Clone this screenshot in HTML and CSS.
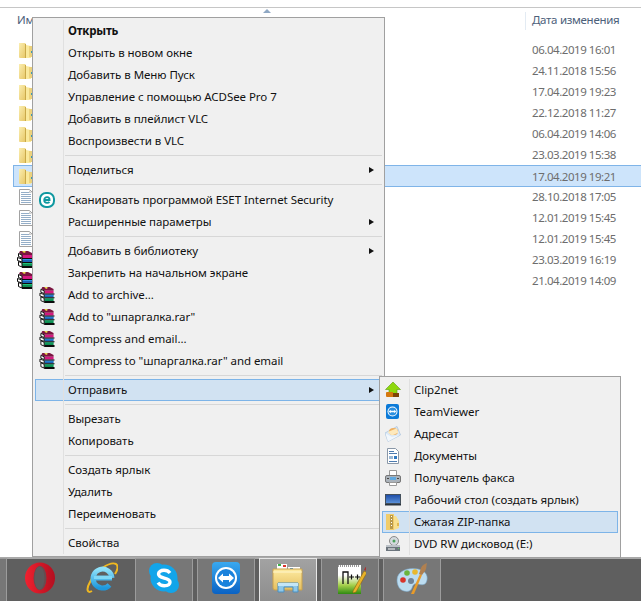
FILE: index.html
```html
<!DOCTYPE html>
<html lang="ru">
<head>
<meta charset="utf-8">
<title>Отправить — Сжатая ZIP-папка</title>
<link rel="stylesheet" href="styles.css">
</head>
<body>
<svg class="defs" width="0" height="0" aria-hidden="true">
  <defs>
    <linearGradient id="fold" x1="0" y1="0" x2="1" y2="1"><stop offset="0" stop-color="#fbeeb0"/><stop offset="1" stop-color="#e6c563"/></linearGradient>
    <symbol id="i-folder" viewBox="0 0 16 16">
      <path d="M1 1h6l1 1v14H2a1 1 0 0 1-1-1z" fill="url(#fold)"/>
      <path d="M7 2h1v14H7z" fill="#c9a94a"/>
      <path d="M8 3l5 1v12H8z" fill="#fae99c"/>
      <path d="M11 4h3v11h-3z" fill="#ecd27c"/>
      <path d="M13 9h1v2h-1z" fill="#3d9bb0"/>
    </symbol>
    <symbol id="i-file" viewBox="0 0 14 16">
      <path d="M.5.5h10l3 3v12H.5z" fill="#fff" stroke="#a2a2a2"/>
      <path d="M2 3.500h8M2 5.500h10M2 7.500h10M2 9.500h10M2 11.500h10M2 13.500h10" stroke="#94aec8"/>
      <path d="M10 1l3 3h-3z" fill="#ccc"/>
    </symbol>
    <symbol id="i-rar" viewBox="0 0 16 17">
      <path d="M3 0h8l4 2v2H5L2 2z" fill="#7a1440"/>
      <path d="M5 0h3l1 1-2 1z" fill="#e8d84a"/>
      <path d="M5 4h10v3H5z" fill="#d4187f"/>
      <path d="M5 8h10v3H5z" fill="#1b62b4"/>
      <path d="M5 8h10v1H5z" fill="#2f96e6"/>
      <path d="M5 12h10v3H5z" fill="#0e8c52"/>
      <path d="M5 12h10v1H5z" fill="#20c078"/>
      <path d="M5 7h11v1H5zM5 11h11v1H5zM5 15h11v2H5z" fill="#0c0c0c"/>
      <path d="M1.500 2.500l3.500 1.500v3L1.500 5.500zM.5 6.500l4.500 1.500v3L.5 9.500zM1.500 10.500l3.500 1.500v4L1.500 14.500z" fill="#fff" stroke="#0c0c0c" stroke-width="1"/>
    </symbol>
    <symbol id="i-eset" viewBox="0 0 16 16">
      <rect x="1" y="1" width="14" height="14" rx="6" fill="#fff" stroke="#0f98a0" stroke-width="2"/>
      <path d="M5.200 8h5.400c0-1.800-1-2.800-2.500-2.800S5.200 6.400 5.200 8s1 2.900 2.900 2.900c1 0 1.800-.3 2.400-.9" fill="none" stroke="#0f98a0" stroke-width="1.800"/>
    </symbol>
    <symbol id="i-clip" viewBox="0 0 16 16">
      <path d="M8 0l7.500 7.500H12V12H4V7.500H.5z" fill="#8ed80e" stroke="#5c9a0a" stroke-width=".6"/>
      <path d="M2 10h6v5H2a1 1 0 0 1-1-1v-3a1 1 0 0 1 1-1z" fill="#d5780f"/>
      <path d="M8 11h6v4H8z" fill="#7e4508"/>
    </symbol>
    <symbol id="i-tv" viewBox="0 0 16 16">
      <rect x="1" y="0" width="13" height="15" rx="2" fill="#0b7ad8"/>
      <circle cx="7.500" cy="7.500" r="5" fill="#fff"/>
      <circle cx="7.500" cy="7.500" r="4" fill="#2a8fe0"/>
      <path d="M3.800 7.500l2-1.800v1.100h3.400V5.700l2 1.800-2 1.800V8.200H5.800v1.100z" fill="#fff"/>
    </symbol>
    <symbol id="i-mail" viewBox="0 0 16 16">
      <path d="M0 7l12-6.500L15.500 9 3 15.500z" fill="#dbe9f7" stroke="#9ab8d6" stroke-width=".6"/>
      <ellipse cx="8.500" cy="5.500" rx="4.500" ry="3.500" fill="#f0b060"/>
      <path d="M2.500 6l9-3.500 2 4-6.500 3z" fill="#fde9bd"/>
      <path d="M.5 7.500L7 11l8-2L3 15.500z" fill="#f2f7fc"/>
    </symbol>
    <symbol id="i-doc" viewBox="0 0 16 16">
      <path d="M2.500.5h8l3 3v12h-11z" fill="#fff" stroke="#8a98a8"/>
      <path d="M4 3.500h5M4 5.500h8M4 13.500h8" stroke="#4c7bb0"/>
      <path d="M4 8h4v3H4z" fill="#9cb8d4"/>
      <path d="M9 8h3v3H9z" fill="#2e78c0"/>
    </symbol>
    <symbol id="i-fax" viewBox="0 0 16 16">
      <path d="M4.500.5h7v5h-7z" fill="#fff" stroke="#9a9a9a"/>
      <rect x="0.500" y="5.500" width="15" height="7" rx="1.500" fill="#aab2ba" stroke="#777"/>
      <path d="M5 7h6v3H5z" fill="#5fa8e0"/>
      <path d="M2 8h2v1H2zM12 8h2v1h-2z" fill="#444"/>
      <path d="M4.500 12.500h7v3h-7z" fill="#fff" stroke="#9a9a9a"/>
    </symbol>
    <linearGradient id="desk" x1="0" y1="0" x2="0" y2="1"><stop offset="0" stop-color="#1f4ea8"/><stop offset="1" stop-color="#5a90d8"/></linearGradient>
    <symbol id="i-desk" viewBox="0 0 16 16">
      <path d="M0 2h16v10H0z" fill="#44505c"/>
      <path d="M1 3h14v8H1z" fill="url(#desk)"/>
      <path d="M0 12h16v1.500H0z" fill="#2a333c"/>
    </symbol>
    <symbol id="i-zip" viewBox="0 0 16 16">
      <path d="M1 0h8v16H1z" fill="#f0cc6a"/>
      <path d="M9 2h2l3 5v7l-5 2z" fill="#f8e08e"/>
      <path d="M5 1h3v14H5z" fill="#b99a4a"/>
      <path d="M6 2h1v1H6zM6 5h1v1H6zM6 8h1v1H6zM6 11h1v1H6z" fill="#fff"/>
      <path d="M12 9h2v3h-2z" fill="#e2b84e"/>
    </symbol>
    <symbol id="i-dvd" viewBox="0 0 16 16">
      <circle cx="9" cy="5" r="4.500" fill="#d4d9de" stroke="#8a8a8a"/>
      <circle cx="9" cy="5" r="1.500" fill="#4aa05a"/>
      <path d="M1 9h14v6H1z" fill="#6c757d"/>
      <path d="M1 9h14v2H1z" fill="#bcc2c8"/>
      <path d="M3 12.500h7v1H3z" fill="#fff"/>
      <path d="M13 12h1v1h-1z" fill="#5ad05a"/>
    </symbol>
    <linearGradient id="operaG" x1="0" y1="0" x2="1" y2="0"><stop offset="0" stop-color="#f0212f"/><stop offset="1" stop-color="#b30f20"/></linearGradient>
    <linearGradient id="ieG" x1="0" y1="0" x2="0" y2="1"><stop offset="0" stop-color="#8fe2fa"/><stop offset="1" stop-color="#1e98dc"/></linearGradient>
    <linearGradient id="tvG" x1="0" y1="0" x2="0" y2="1"><stop offset="0" stop-color="#39a9f0"/><stop offset="1" stop-color="#0a62c4"/></linearGradient>
    <linearGradient id="nppG" x1="0" y1="0" x2="0" y2="1"><stop offset=".35" stop-color="#fff"/><stop offset=".7" stop-color="#a4cf4a"/><stop offset="1" stop-color="#2e8a12"/></linearGradient>
    <linearGradient id="expG" x1="0" y1="0" x2="0" y2="1"><stop offset="0" stop-color="#fdeaa0"/><stop offset="1" stop-color="#e5bf60"/></linearGradient>
  </defs>
</svg>

<div class="screen">
  <main class="explorer">
    <div class="top-line"></div>
    <header class="col-head">
      <span class="col-name">Имя</span>
      <span class="col-date">Дата изменения</span>
    </header>
    <span class="sort-arrow"></span>
    <ul class="list">
      <li class="row"><svg class="ic-folder"><use href="#i-folder"/></svg><span class="date">06.04.2019 16:01</span></li>
      <li class="row"><svg class="ic-folder"><use href="#i-folder"/></svg><span class="date">24.11.2018 15:56</span></li>
      <li class="row"><svg class="ic-folder"><use href="#i-folder"/></svg><span class="date">17.04.2019 19:23</span></li>
      <li class="row"><svg class="ic-folder"><use href="#i-folder"/></svg><span class="date">22.12.2018 11:27</span></li>
      <li class="row"><svg class="ic-folder"><use href="#i-folder"/></svg><span class="date">06.04.2019 14:06</span></li>
      <li class="row"><svg class="ic-folder"><use href="#i-folder"/></svg><span class="date">23.03.2019 15:38</span></li>
      <li class="row selected"><svg class="ic-folder"><use href="#i-folder"/></svg><span class="date">17.04.2019 19:21</span></li>
      <li class="row"><svg class="ic-file"><use href="#i-file"/></svg><span class="date">28.10.2018 17:05</span></li>
      <li class="row"><svg class="ic-file"><use href="#i-file"/></svg><span class="date">12.01.2019 15:45</span></li>
      <li class="row"><svg class="ic-file"><use href="#i-file"/></svg><span class="date">12.01.2019 15:45</span></li>
      <li class="row"><svg class="ic-rar"><use href="#i-rar"/></svg><span class="date">23.03.2019 16:19</span></li>
      <li class="row"><svg class="ic-rar"><use href="#i-rar"/></svg><span class="date">21.04.2019 14:09</span></li>
    </ul>
  </main>

  <footer class="taskbar">
    <div class="tile"></div>
    <div class="tile bare">
      <svg class="tb-icon" viewBox="0 0 32 32"><ellipse cx="16" cy="16" rx="15" ry="15.500" fill="url(#operaG)"/><ellipse cx="16" cy="16" rx="6.500" ry="12" fill="#6a4a4e"/><ellipse cx="15.500" cy="16" rx="5" ry="11.500" fill="#5c5a5c"/></svg>
    </div>
    <div class="tile bare">
      <svg class="tb-icon" viewBox="0 0 32 32"><path d="M6 29C1 32 0 27 4 20 9 9 24-1 30 2c3 2 1 7-1 10" fill="none" stroke="#f0b820" stroke-width="2"/><path d="M8 16h18M26 16A9.500 9.500 0 1 0 23.500 23" fill="none" stroke="url(#ieG)" stroke-width="5"/><path d="M8 15.500h18" stroke="#7fd8f6" stroke-width="3"/></svg>
    </div>
    <div class="tile">
      <svg class="tb-icon" viewBox="0 0 32 32"><circle cx="9" cy="9" r="8" fill="#12a5ea"/><circle cx="23" cy="23" r="8" fill="#12a5ea"/><circle cx="16" cy="16" r="13.500" fill="#12a5ea"/><path d="M22 11c-1.500-2-3.500-2.800-6-2.800-3.200 0-5.500 1.600-5.500 3.900 0 5.200 11.500 2.800 11.500 8 0 2.300-2.400 3.700-5.700 3.700-2.800 0-4.800-1-6.300-3.200" fill="none" stroke="#fff" stroke-width="3.400"/></svg>
    </div>
    <div class="tile">
      <svg class="tb-icon" viewBox="0 0 32 32"><rect x="2" y="0" width="28" height="32" rx="4" fill="url(#tvG)"/><circle cx="16" cy="16" r="11" fill="#fff"/><circle cx="16" cy="16" r="9" fill="#1a82dc"/><path d="M8 16l5-4.500V14h6v-2.500l5 4.500-5 4.500V18h-6v2.500z" fill="#fff"/></svg>
    </div>
    <div class="tile active">
      <svg class="tb-icon" viewBox="0 0 32 32"><path d="M5 2h10v5H5z" fill="#fff"/><path d="M6 2h3v2H6z" fill="#3bb04a"/><path d="M11 3h3v2h-3z" fill="#d9342b"/><path d="M16 5h12v4H16z" fill="#fff"/><path d="M18 6h3v2h-3z" fill="#2e86d8"/><path d="M1 7h29v21H3a2 2 0 0 1-2-2z" fill="url(#expG)" stroke="#c9a24c"/><path d="M1 10h29" stroke="#fff6cc"/><path d="M6 21h20v9h-5v-5h-9v5H6z" fill="#8fc8e8" stroke="#4a8fc0"/><path d="M6 21h20v3H6z" fill="#c4e6f6"/></svg>
    </div>
    <div class="tile">
      <svg class="tb-icon" viewBox="0 0 32 32"><rect x="4" y="3" width="23" height="29" fill="url(#nppG)"/><path d="M4 4h22" stroke="#999" stroke-dasharray="1 1" stroke-width="2"/><path d="M9 22V10h5v12" fill="none" stroke="#111" stroke-width="1.300"/><path d="M15 15h5M17.500 12.500v5M21 15h5M23.500 12.500v5" stroke="#111" stroke-width="1.200"/><path d="M19 29L30 9l3 1.500L22 30l-3 1z" fill="#e8b32a" stroke="#8a6410" stroke-width=".6"/><path d="M30 8l1.500-3 2 1-1 3z" fill="#a83232"/></svg>
    </div>
    <div class="tile">
      <svg class="tb-icon" viewBox="0 0 32 32"><path d="M1 18C1 9 12 5 22 7c7 1.500 10 6 9 11-1 6-6 5-9 4-4-1-5 1-6 4-1 3-4 4-8 3-4-1-7-5-7-11z" fill="#bcdcf0" stroke="#7aa8c8" stroke-width=".6"/><circle cx="7" cy="18" r="2.800" fill="#d8342b"/><circle cx="11" cy="11" r="2.800" fill="#6bb53c"/><circle cx="19" cy="10" r="2.800" fill="#e9b82e"/><circle cx="15" cy="19" r="3" fill="#6f8296"/><path d="M15 32l9-20 2 1-8 19z" fill="#e89b2a"/><path d="M23 12l2-6c1-3 4-4 6-5-1 3 0 5-2 8l-3 4z" fill="#b08050"/></svg>
    </div>
  </footer>

  <nav class="menu main-menu">
    <div class="item strong"><span class="slot"></span><span class="label">Открыть</span></div>
    <div class="item"><span class="slot"></span><span class="label">Открыть в новом окне</span></div>
    <div class="item"><span class="slot"></span><span class="label">Добавить в Меню Пуск</span></div>
    <div class="item"><span class="slot"></span><span class="label">Управление с помощью ACDSee Pro 7</span></div>
    <div class="item"><span class="slot"></span><span class="label">Добавить в плейлист VLC</span></div>
    <div class="item"><span class="slot"></span><span class="label">Воспроизвести в VLC</span></div>
    <div class="sep"></div>
    <div class="item"><span class="slot"></span><span class="label">Поделиться</span><span class="arrow"></span></div>
    <div class="sep wide"></div>
    <div class="item"><span class="slot"><svg class="ic16"><use href="#i-eset"/></svg></span><span class="label">Сканировать программой ESET Internet Security</span></div>
    <div class="item"><span class="slot"></span><span class="label">Расширенные параметры</span><span class="arrow"></span></div>
    <div class="sep"></div>
    <div class="item"><span class="slot"></span><span class="label">Добавить в библиотеку</span><span class="arrow"></span></div>
    <div class="item"><span class="slot"></span><span class="label">Закрепить на начальном экране</span></div>
    <div class="item"><span class="slot"><svg class="ic16"><use href="#i-rar"/></svg></span><span class="label">Add to archive...</span></div>
    <div class="item"><span class="slot"><svg class="ic16"><use href="#i-rar"/></svg></span><span class="label">Add to "шпаргалка.rar"</span></div>
    <div class="item"><span class="slot"><svg class="ic16"><use href="#i-rar"/></svg></span><span class="label">Compress and email...</span></div>
    <div class="item"><span class="slot"><svg class="ic16"><use href="#i-rar"/></svg></span><span class="label">Compress to "шпаргалка.rar" and email</span></div>
    <div class="sep"></div>
    <div class="item hot"><span class="slot"></span><span class="label">Отправить</span><span class="arrow"></span></div>
    <div class="sep"></div>
    <div class="item"><span class="slot"></span><span class="label">Вырезать</span></div>
    <div class="item"><span class="slot"></span><span class="label">Копировать</span></div>
    <div class="sep"></div>
    <div class="item"><span class="slot"></span><span class="label">Создать ярлык</span></div>
    <div class="item"><span class="slot"></span><span class="label">Удалить</span></div>
    <div class="item"><span class="slot"></span><span class="label">Переименовать</span></div>
    <div class="sep"></div>
    <div class="item"><span class="slot"></span><span class="label">Свойства</span></div>
  </nav>

  <nav class="menu sub-menu">
    <div class="item"><span class="slot"><svg class="ic16"><use href="#i-clip"/></svg></span><span class="label">Clip2net</span></div>
    <div class="item"><span class="slot"><svg class="ic16"><use href="#i-tv"/></svg></span><span class="label">TeamViewer</span></div>
    <div class="item"><span class="slot"><svg class="ic16"><use href="#i-mail"/></svg></span><span class="label">Адресат</span></div>
    <div class="item"><span class="slot"><svg class="ic16"><use href="#i-doc"/></svg></span><span class="label">Документы</span></div>
    <div class="item"><span class="slot"><svg class="ic16"><use href="#i-fax"/></svg></span><span class="label">Получатель факса</span></div>
    <div class="item"><span class="slot"><svg class="ic16"><use href="#i-desk"/></svg></span><span class="label">Рабочий стол (создать ярлык)</span></div>
    <div class="item hot"><span class="slot"><svg class="ic16"><use href="#i-zip"/></svg></span><span class="label">Сжатая ZIP-папка</span></div>
    <div class="item"><span class="slot"><svg class="ic16"><use href="#i-dvd"/></svg></span><span class="label">DVD RW дисковод (E:)</span></div>
  </nav>
</div>
</body>
</html>
```
FILE: styles.css
```css
* { box-sizing: border-box; }
html, body { margin: 0; padding: 0; background: #fff; }
body { font-family: "Noto Sans", "Open Sans", sans-serif; font-size: 11.5px; letter-spacing: -0.05px; color: #111; }
.defs { position: absolute; }

.screen {
  position: relative;
  width: 641px;
  height: 601px;
  overflow: hidden;
  display: flex;
  flex-direction: column;
}

.explorer { flex: 1; position: relative; min-height: 0; }
.top-line { height: 8px; border-bottom: 1px solid #c6c6c6; }
.col-head { display: flex; height: 31px; padding-left: 17px; padding-top: 4px; color: #4c607a; letter-spacing: -0.3px; }
.col-name { flex: 1; }
.col-date { width: 116px; padding-left: 6px; height: 18px; border-left: 1px solid #e3ebf3; }
.sort-arrow {
  position: absolute;
  left: 263px;
  top: 9px;
  border-left: 4px solid transparent;
  border-right: 4px solid transparent;
  border-bottom: 4px solid #8fa8c4;
}

.list { list-style: none; margin: 0 -2px 0 13px; padding: 0; }
.row { display: flex; align-items: center; height: 21px; padding-left: 4px; }
.row.selected { height: 22px; margin-bottom: -1px; background: #cde4fb; box-shadow: inset 0 0 0 1px #7fb4e8; }
.date { margin-left: auto; width: 111px; color: #6d6d6d; letter-spacing: -0.45px; }
.ic-folder { width: 16px; height: 16px; margin-left: 1px; }
.ic-file { width: 14px; height: 16px; margin-left: 2px; }
.ic-rar { width: 16px; height: 17px; }

.taskbar {
  height: 44px;
  flex: none;
  display: flex;
  gap: 4px;
  margin-left: -51px;
  border-top: 2px solid #a9a9a9;
  background: #5f5f5f;
}
.tile {
  flex: none;
  width: 58px;
  height: 46px;
  margin-top: -1px;
  display: flex;
  align-items: flex-start;
  justify-content: center;
  padding-top: 3px;
  border: 1px solid #9c9c9c;
  background: #777;
}
.tile.bare { border-color: transparent; background: transparent; }
.tile.active { border-color: #e6e6e6; background: linear-gradient(#a2a2a2, #8c8c8c); }
.tb-icon { width: 32px; height: 32px; }

.menu {
  position: absolute;
  border: 1px solid #a0a0a0;
  background: #f0f0f0;
  padding: 2px;
}
.menu::before {
  content: "";
  position: absolute;
  top: 2px;
  bottom: 2px;
  width: 1px;
  background: #e0e0e0;
  z-index: 1;
}
.main-menu { left: 32px; top: 17px; width: 353px; }
.main-menu::before { left: 30px; }
.sub-menu { left: 379px; top: 376px; width: 242px; z-index: 2; }
.sub-menu::before { left: 29px; }

.item { display: flex; align-items: center; height: 22px; position: relative; white-space: nowrap; }
.item.strong .label { font-weight: 700; letter-spacing: -0.2px; }
.item.hot { background: #d1e2f2; box-shadow: inset 0 0 0 1px #7db4e8; }
.slot { flex: none; width: 33px; padding-left: 4px; display: flex; align-items: center; }
.sub-menu .slot { width: 32px; padding-left: 3px; }
.ic16 { width: 16px; height: 16px; display: block; }
.label { flex: 1; color: #111; padding-bottom: 2px; }
.arrow {
  position: absolute;
  right: 8px;
  top: 8px;
  border-top: 3px solid transparent;
  border-bottom: 3px solid transparent;
  border-left: 5px solid #111;
}
.sep { height: 7px; padding-top: 3px; margin-left: 30px; }
.sep::before { content: ""; display: block; height: 1px; background: #d7d7d7; }
.sep.wide { height: 8px; }
```
